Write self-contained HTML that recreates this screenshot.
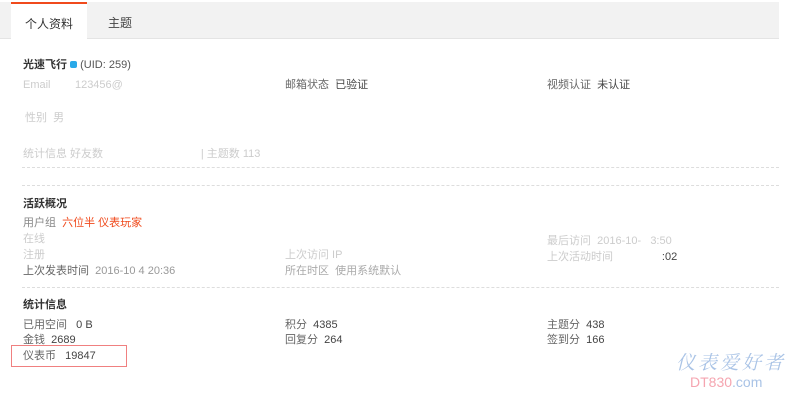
<!DOCTYPE html>
<html><head><meta charset="utf-8">
<style>
*{margin:0;padding:0;box-sizing:border-box}
body{width:799px;height:402px;background:#fff;font-family:"Liberation Sans","Noto Sans CJK SC",sans-serif;font-size:11px;color:#555;position:relative;overflow:hidden}
.a{position:absolute;white-space:nowrap;line-height:14px}
.bar{position:absolute;left:0;top:2px;width:779px;height:37px;background:#f2f2f2;border-bottom:1px solid #e4e4e4}
.tab{position:absolute;left:11px;top:2px;width:76px;height:38px;background:#fff;border-top:2px solid #f04a1c;font-size:12px;color:#333;text-align:center;line-height:40px}
.t2{position:absolute;left:108px;top:2px;font-size:12px;color:#444;line-height:42px}
.h{font-weight:bold;color:#333;font-size:11px}
.dash{position:absolute;left:22px;width:757px;border-top:1px dashed #ddd;height:0}
.k{color:#666}
.v{color:#444}
.fz{color:#ccc}
</style></head><body>
<div class="bar"></div>
<div class="tab">个人资料</div>
<div class="t2">主题</div>

<div class="a h" style="left:23px;top:58px">光速飞行 <span style="display:inline-block;width:7px;height:7px;background:#2aa9e8;border-radius:2px;vertical-align:middle;margin-top:-2px"></span> <span style="font-weight:normal;color:#555">(UID: 259)</span></div>
<div class="a fz" style="left:23px;top:78px">Email &nbsp;&nbsp;&nbsp;&nbsp;&nbsp;&nbsp; 123456@</div>
<div class="a" style="left:285px;top:78px"><span class="k">邮箱状态</span> &nbsp;<span class="v">已验证</span></div>
<div class="a" style="left:547px;top:78px"><span class="k">视频认证</span> &nbsp;<span class="v">未认证</span></div>
<div class="a fz" style="left:25px;top:111px">性别 &nbsp;男</div>
<div class="a fz" style="left:23px;top:147px">统计信息 好友数 &nbsp;&nbsp;&nbsp;&nbsp;&nbsp;&nbsp;&nbsp;&nbsp;&nbsp;&nbsp;&nbsp;&nbsp;&nbsp;&nbsp;&nbsp;&nbsp;&nbsp;&nbsp;&nbsp;&nbsp;&nbsp;&nbsp;&nbsp;&nbsp;&nbsp;&nbsp;&nbsp;&nbsp;&nbsp;&nbsp;&nbsp;| 主题数 113</div>
<div class="dash" style="top:167px"></div>
<div class="dash" style="top:185px"></div>

<div class="a h" style="left:23px;top:197px">活跃概况</div>
<div class="a" style="left:23px;top:216px"><span style="color:#888">用户组</span> &nbsp;<span style="color:#f04a1c">六位半 仪表玩家</span></div>
<div class="a fz" style="left:23px;top:232px">在线</div>
<div class="a fz" style="left:547px;top:234px">最后访问 &nbsp;2016-10-&nbsp;&nbsp; 3:50</div>
<div class="a fz" style="left:23px;top:248px">注册</div>
<div class="a fz" style="left:285px;top:248px">上次访问 IP</div>
<div class="a" style="left:547px;top:250px"><span class="fz">上次活动时间 &nbsp;&nbsp;&nbsp;&nbsp;&nbsp;&nbsp;&nbsp;&nbsp;&nbsp;&nbsp;&nbsp;&nbsp;&nbsp;&nbsp;&nbsp;</span><span class="v">:02</span></div>
<div class="a" style="left:23px;top:264px"><span class="k">上次发表时间</span> &nbsp;<span style="color:#999">2016-10 4 20:36</span></div>
<div class="a" style="left:285px;top:264px;color:#aaa">所在时区 &nbsp;使用系统默认</div>
<div class="dash" style="top:287px"></div>

<div class="a h" style="left:23px;top:298px">统计信息</div>
<div class="a" style="left:23px;top:318px"><span class="k">已用空间</span> &nbsp;&nbsp;<span class="v">0 B</span></div>
<div class="a" style="left:285px;top:318px"><span class="k">积分</span> &nbsp;<span class="v">4385</span></div>
<div class="a" style="left:547px;top:318px"><span class="k">主题分</span> &nbsp;<span class="v">438</span></div>
<div class="a" style="left:23px;top:333px"><span class="k">金钱</span> &nbsp;<span class="v">2689</span></div>
<div class="a" style="left:285px;top:333px"><span class="k">回复分</span> &nbsp;<span class="v">264</span></div>
<div class="a" style="left:547px;top:333px"><span class="k">签到分</span> &nbsp;<span class="v">166</span></div>
<div class="a" style="left:23px;top:349px"><span class="k">仪表币</span> &nbsp;&nbsp;<span class="v">19847</span></div>
<div style="position:absolute;left:11px;top:345px;width:116px;height:22px;border:1px solid #f08080"></div>

<div class="a" style="left:676px;top:351px;font-family:'Noto Serif CJK SC',serif;font-size:19px;line-height:22px;color:#a9c3e6;font-style:italic;letter-spacing:3px">仪表爱好者</div>
<div class="a" style="left:690px;top:374px;font-size:14px;line-height:16px"><span style="color:#f5a5b0">DT830</span><span style="color:#a9c3e6">.com</span></div>
</body></html>
